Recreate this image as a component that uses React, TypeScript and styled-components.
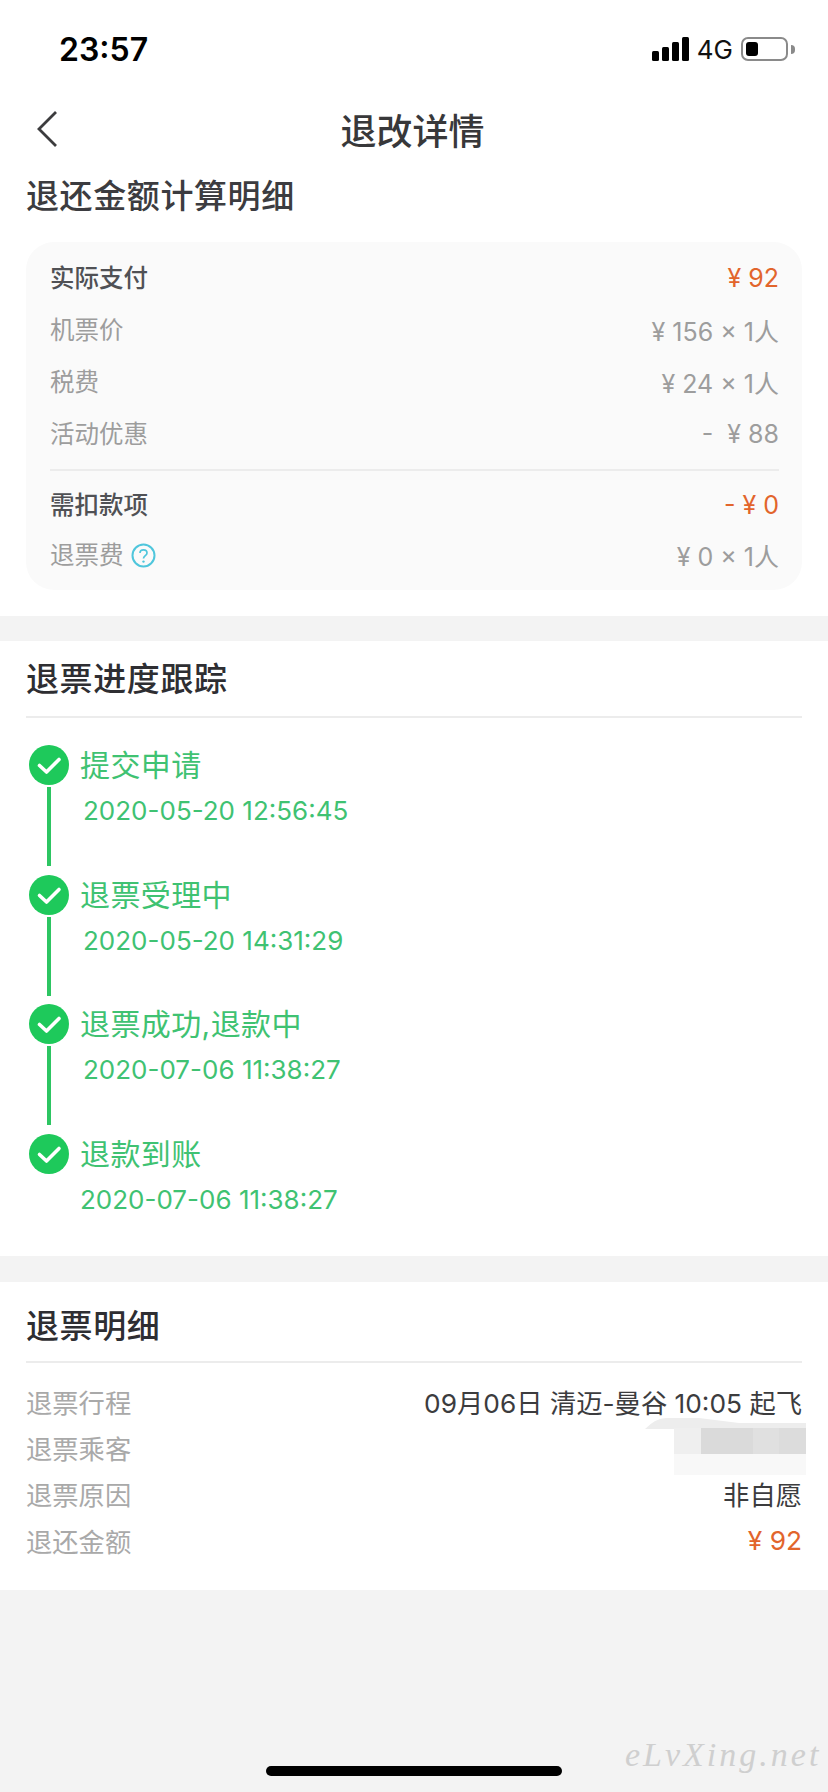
import React from 'react';
import styled, { createGlobalStyle } from 'styled-components';

const FONT = `Inter, "Noto Sans CJK SC", sans-serif`;

const costRows = [
    { label: '机票价', value: '¥ 156 × 1人' },
    { label: '税费', value: '¥ 24 × 1人' },
    { label: '活动优惠', value: '-  ¥ 88' },
];

const steps = [
    { title: '提交申请', time: '2020-05-20 12:56:45' },
    { title: '退票受理中', time: '2020-05-20 14:31:29' },
    { title: '退票成功,退款中', time: '2020-07-06 11:38:27' },
    { title: '退款到账', time: '2020-07-06 11:38:27' },
];

const App: React.FC = () => {
    return (
        <Page>
            <GlobalStyle />
            <WhiteBlock>
                <StatusBar>
                    <Clock>23:57</Clock>
                    <StatusRight>
                        <SignalIcon />
                        <Network>4G</Network>
                        <Battery><BatteryLevel /></Battery>
                        <BatteryNub />
                    </StatusRight>
                </StatusBar>
                <NavBar>
                    <BackButton><BackIcon /></BackButton>
                    <NavTitle>退改详情</NavTitle>
                </NavBar>
                <CostHeading>退还金额计算明细</CostHeading>
                <CostCard>
                    <CostRow $height={52}>
                        <StrongLabel>实际支付</StrongLabel>
                        <OrangeValue>¥ 92</OrangeValue>
                    </CostRow>
                    {costRows.map((row) => (
                        <CostRow $height={52} key={row.label}>
                            <CostLabel>{row.label}</CostLabel>
                            <CostValue>{row.value}</CostValue>
                        </CostRow>
                    ))}
                    <CostDivider />
                    <CostRow $height={50}>
                        <StrongLabel>需扣款项</StrongLabel>
                        <OrangeValue>- ¥ 0</OrangeValue>
                    </CostRow>
                    <CostRow $height={50}>
                        <CostLabel>退票费<HelpIcon /></CostLabel>
                        <CostValue>¥ 0 × 1人</CostValue>
                    </CostRow>
                </CostCard>
            </WhiteBlock>

            <WhiteSection>
                <SectionHeading>退票进度跟踪</SectionHeading>
                <Timeline>
                    {steps.map((step, i) => (
                        <Step key={i} $last={i === steps.length - 1}>
                            <Rail>
                                <CheckIcon />
                                {i < steps.length - 1 && <RailLine />}
                            </Rail>
                            <StepBody>
                                <StepTitle>{step.title}</StepTitle>
                                <StepTime $last={i === steps.length - 1}>{step.time}</StepTime>
                            </StepBody>
                        </Step>
                    ))}
                </Timeline>
            </WhiteSection>

            <DetailSection>
                <DetailHeading>退票明细</DetailHeading>
                <DetailList>
                    <DetailRow>
                        <DetailLabel>退票行程</DetailLabel>
                        <DetailValue>09月06日 清迈-曼谷 10:05 起飞</DetailValue>
                    </DetailRow>
                    <DetailRow>
                        <DetailLabel>退票乘客</DetailLabel>
                        <Redaction />
                    </DetailRow>
                    <DetailRow>
                        <DetailLabel>退票原因</DetailLabel>
                        <DetailValue>非自愿</DetailValue>
                    </DetailRow>
                    <DetailRow>
                        <DetailLabel>退还金额</DetailLabel>
                        <DetailOrange>¥ 92</DetailOrange>
                    </DetailRow>
                </DetailList>
            </DetailSection>

            <HomeBar />
            <Watermark>eLvXing.net</Watermark>
        </Page>
    );
};

export default App;

const SignalIcon = () => (
    <svg width="37" height="24" viewBox="0 0 37 24">
        <rect x="0" y="14" width="7" height="10" rx="1.5" fill="#000" />
        <rect x="10" y="10" width="7" height="14" rx="1.5" fill="#000" />
        <rect x="20" y="5" width="7" height="19" rx="1.5" fill="#000" />
        <rect x="30" y="0" width="7" height="24" rx="1.5" fill="#000" />
    </svg>
);

const BackIcon = () => (
    <svg width="22" height="38" viewBox="0 0 22 38" fill="none">
        <path d="M20 2 L3 19 L20 36" stroke="#3c3c3e" strokeWidth="2.8" />
    </svg>
);

const HelpIcon = () => (
    <HelpSvg width="25" height="25" viewBox="0 0 25 25" fill="none">
        <circle cx="12.5" cy="12.5" r="11" stroke="#4fc6dc" strokeWidth="2" />
        <path d="M9 10 C9 5.8 16 5.8 16 10 C16 12.6 12.5 12.8 12.5 15.5" stroke="#4fc6dc" strokeWidth="1.7" />
        <circle cx="12.5" cy="18.6" r="1.2" fill="#4fc6dc" />
    </HelpSvg>
);

const CheckIcon = () => (
    <svg width="40" height="40" viewBox="0 0 40 40">
        <circle cx="20" cy="20" r="20" fill="#1ec95b" />
        <path d="M10.5 20.5 L17.5 27 L30 14.5" fill="none" stroke="#fff" strokeWidth="3.6" strokeLinecap="round" strokeLinejoin="round" />
    </svg>
);

// blurred-out passenger name
const Redaction = () => (
    <RedactionSvg width="163" height="58" viewBox="0 0 163 58">
        <path d="M1 12 Q12 1 22 1 L55 1 L95 6 L162 6 L162 12 Z" fill="#ededed" />
        <rect x="30" y="11" width="27" height="26" fill="#efefef" />
        <rect x="30" y="37" width="132" height="21" fill="#f8f8f8" />
        <rect x="57" y="11" width="52" height="26" fill="#dadada" />
        <rect x="109" y="11" width="26" height="26" fill="#e0e0e0" />
        <rect x="135" y="11" width="27" height="26" fill="#dcdcdc" />
    </RedactionSvg>
);

const GlobalStyle = createGlobalStyle`
    html, body {
        margin: 0;
        padding: 0;
        background: #f3f3f3;
    }
    * {
        box-sizing: border-box;
    }
`;

const Page = styled.div`
    position: relative;
    display: flex;
    flex-direction: column;
    width: 828px;
    height: 1792px;
    overflow: hidden;
    background-color: #f3f3f3;
    font-family: ${FONT};
`;

const WhiteBlock = styled.div`
    display: flex;
    flex-direction: column;
    height: 616px;
    padding: 0 26px;
    background-color: #fff;
`;

const StatusBar = styled.div`
    display: flex;
    align-items: center;
    justify-content: space-between;
    height: 98px;
    padding: 0 7px 0 33px;
`;

const Clock = styled.div`
    font-size: 32px;
    font-weight: 600;
    color: #000;
`;

const StatusRight = styled.div`
    display: flex;
    align-items: center;
`;

const Network = styled.div`
    margin: 0 8px;
    font-size: 26px;
    color: #111;
`;

const Battery = styled.div`
    width: 47px;
    height: 24px;
    padding: 3px;
    border: 2.5px solid #8a8a8a;
    border-radius: 7px;
`;

const BatteryLevel = styled.div`
    width: 12px;
    height: 100%;
    background-color: #000;
    border-radius: 3px;
`;

const BatteryNub = styled.div`
    width: 4px;
    height: 9px;
    margin-left: 3px;
    background-color: #8a8a8a;
    border-radius: 0 4px 4px 0;
`;

const NavBar = styled.div`
    display: grid;
    grid-template-columns: 1fr auto 1fr;
    align-items: center;
    height: 62px;
    padding-right: 3px;
`;

const BackButton = styled.div`
    display: flex;
    padding-left: 10px;
`;

const NavTitle = styled.div`
    font-size: 36px;
    font-weight: 500;
    color: #38383a;
`;

const CostHeading = styled.div`
    height: 82px;
    padding-top: 12px;
    font-size: 33px;
    font-weight: 500;
    line-height: 48px;
    letter-spacing: 0.6px;
    color: #3c3c40;
`;

const CostCard = styled.div`
    display: flex;
    flex-direction: column;
    padding: 10px 23px 10px 24px;
    background-color: #fafafa;
    border-radius: 28px;
`;

const CostRow = styled.div<{ $height: number }>`
    display: flex;
    align-items: center;
    justify-content: space-between;
    height: ${({ $height }) => $height}px;
    font-size: 24.5px;
`;

const CostLabel = styled.div`
    display: flex;
    align-items: center;
    margin-top: -3px;
    color: #9d9d9d;
`;

const StrongLabel = styled.div`
    margin-top: -3px;
    font-weight: 500;
    color: #505155;
`;

const CostValue = styled.div`
    margin-top: -1px;
    font-size: 25px;
    white-space: pre;
    color: #9d9d9d;
`;

const OrangeValue = styled.div`
    margin-top: -1px;
    font-size: 25px;
    color: #e2652c;
`;

const CostDivider = styled.div`
    height: 2px;
    margin: 9px 0 9px;
    background-color: #ececec;
`;

const HelpSvg = styled.svg`
    margin-left: 7px;
    margin-top: 3px;
`;

const WhiteSection = styled.div`
    display: flex;
    flex-direction: column;
    height: 615px;
    margin-top: 25px;
    padding: 0 26px;
    background-color: #fff;
`;

const DetailSection = styled(WhiteSection)`
    height: 308px;
    margin-top: 26px;
`;

const SectionHeading = styled.div`
    flex: none;
    height: 77px;
    padding-top: 14px;
    font-size: 33px;
    font-weight: 500;
    line-height: 48px;
    letter-spacing: 0.6px;
    color: #2e2e32;
    border-bottom: 2px solid #ececec;
`;

const DetailHeading = styled(SectionHeading)`
    height: 81px;
    padding-top: 20px;
`;

const Timeline = styled.div`
    display: flex;
    flex-direction: column;
    padding: 27px 0 0 3px;
`;

const Step = styled.div<{ $last: boolean }>`
    display: flex;
    height: ${({ $last }) => ($last ? 100 : 129.6)}px;
`;

const Rail = styled.div`
    display: flex;
    flex-direction: column;
    align-items: center;
    width: 40px;
`;

const RailLine = styled.div`
    width: 4px;
    height: 79px;
    margin-top: 2px;
    margin-right: 1px;
    background-color: #2dc562;
`;

const StepBody = styled.div`
    display: flex;
    flex-direction: column;
    margin-left: 11px;
`;

const StepTitle = styled.div`
    height: 40px;
    font-size: 30px;
    line-height: 40px;
    letter-spacing: 0.4px;
    color: #3fc272;
`;

const StepTime = styled.div<{ $last: boolean }>`
    margin: 8px 0 0 ${({ $last }) => ($last ? 0 : 3)}px;
    font-size: 26px;
    line-height: 36px;
    color: #3fc272;
`;

const DetailList = styled.div`
    display: flex;
    flex-direction: column;
    padding-top: 15px;
`;

const DetailRow = styled.div`
    position: relative;
    display: flex;
    align-items: center;
    justify-content: space-between;
    height: 46.3px;
`;

const DetailLabel = styled.div`
    font-size: 26.3px;
    color: #a9a9a9;
`;

const DetailValue = styled.div`
    font-size: 26.3px;
    color: #3c3c3e;
`;

const DetailOrange = styled.div`
    font-size: 26.3px;
    color: #e2652c;
`;

const RedactionSvg = styled.svg`
    position: absolute;
    top: -7px;
    right: -5px;
`;

const HomeBar = styled.div`
    position: absolute;
    left: 266px;
    bottom: 16px;
    width: 296px;
    height: 10px;
    background-color: #000;
    border-radius: 5px;
`;

const Watermark = styled.div`
    position: absolute;
    left: 625px;
    bottom: 18px;
    font-family: "Liberation Serif", serif;
    font-style: italic;
    font-size: 34px;
    letter-spacing: 3px;
    color: #cfcfcf;
`;
